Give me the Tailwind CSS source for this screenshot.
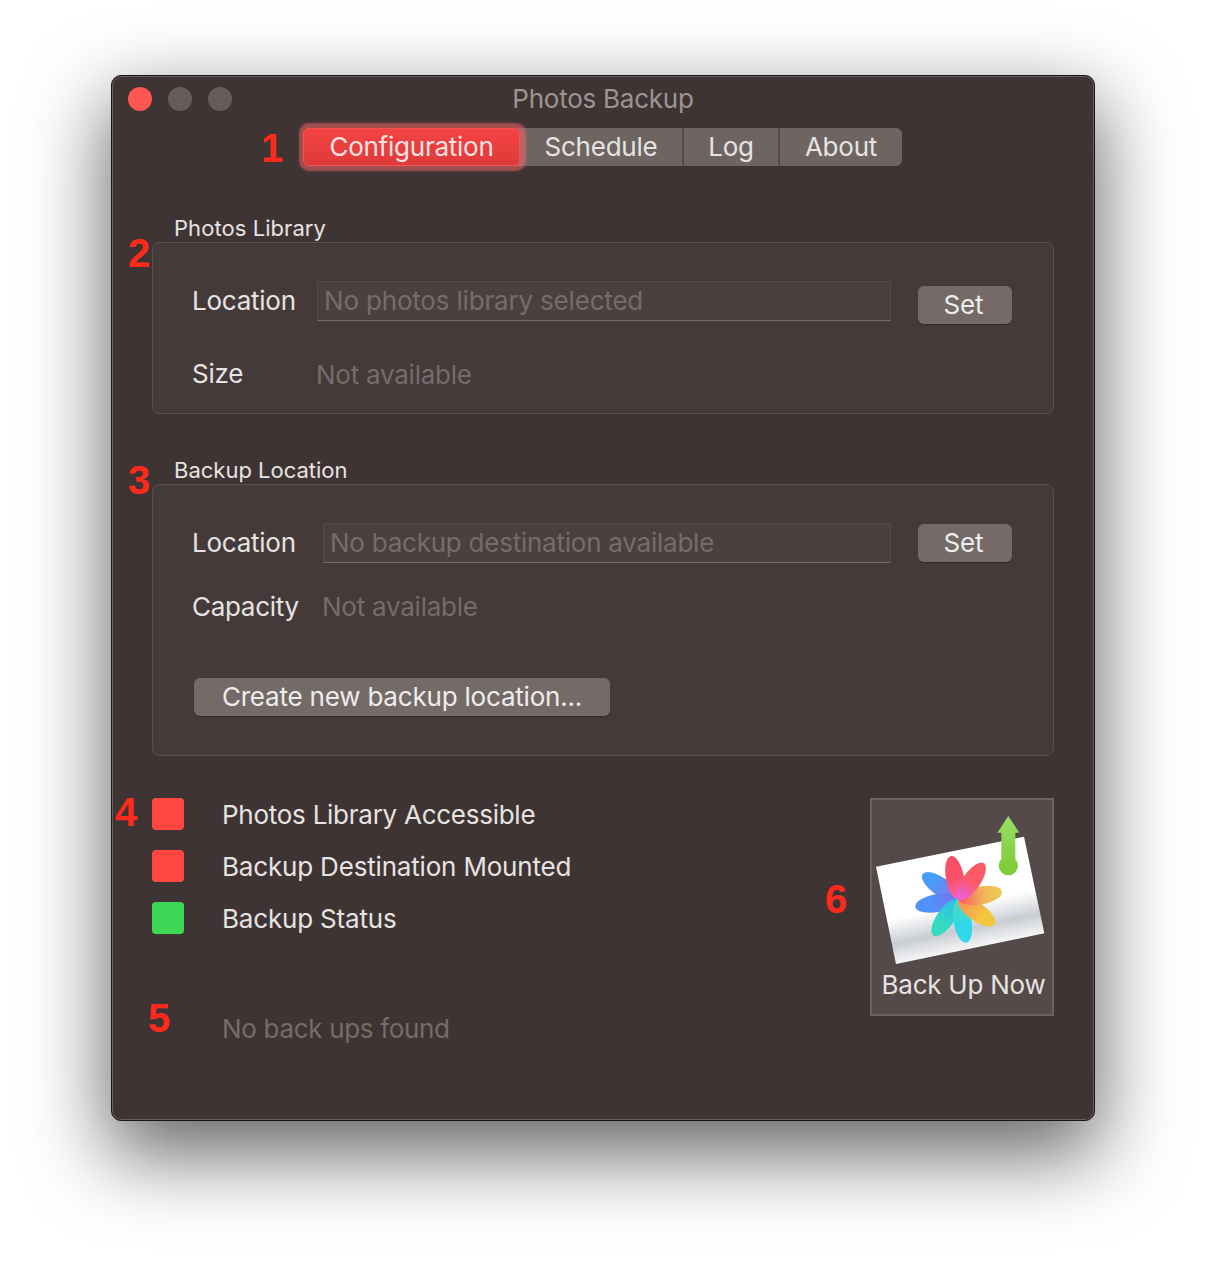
<!DOCTYPE html>
<html lang="en">

<head>
    <meta charset="UTF-8">
    <title>Photos Backup</title>
    <script src="https://cdn.jsdelivr.net/npm/@tailwindcss/browser@4"></script>
</head>

<body class="bg-white font-['Inter',sans-serif] text-[#e6e3e3]">
    <div class="relative w-[1206px] h-[1268px] pt-[75px] overflow-hidden">

        <!-- Window -->
        <div class="ml-[111px] w-[984px] h-[1046px] rounded-[10px] border border-[#1a1515] bg-[#3f3434] shadow-[0_30px_80px_4px_rgba(0,0,0,0.6),inset_0_0_0_1px_#6a615f]">
            <!-- Title bar -->
            <div class="grid grid-cols-[1fr_auto_1fr] items-center h-[46px]">
                <div class="flex gap-4 pl-4">
                    <div class="w-6 h-6 rounded-full bg-[#fc5753]"></div>
                    <div class="w-6 h-6 rounded-full bg-[#655d5b]"></div>
                    <div class="w-6 h-6 rounded-full bg-[#655d5b]"></div>
                </div>
                <div class="text-[26px] leading-[32px] text-[#9b9594] tracking-[-0.24px]">Photos Backup</div>
                <div></div>
            </div>

            <!-- Tabs -->
            <div class="flex mt-[6px] ml-[191px] w-[599px] h-[38px] text-[26px] tracking-[-0.24px] rounded-[6px] bg-[#6e6563]">
                <div class="relative z-10 w-[217px] pb-[2px] flex items-center justify-center rounded-[5px] text-[#fbe3e3] border border-[#f65252] bg-gradient-to-b from-[#f54343] to-[#dd3a3a] shadow-[1px_0_2px_5px_rgba(244,100,104,0.56)]">Configuration</div>
                <div class="w-[164px] pb-[2px] flex items-center justify-center border-r-2 border-[#564c4b]">Schedule</div>
                <div class="w-[96px] pb-[2px] flex items-center justify-center border-r-2 border-[#564c4b]">Log</div>
                <div class="w-[122px] pb-[2px] flex items-center justify-center">About</div>
            </div>

            <div class="ml-[40px] w-[902px]">
                <!-- Photos Library -->
                <div class="mt-[48px] h-[28px] pl-[22px] text-[22px] leading-[28px] tracking-[0.06px]">Photos Library</div>
                <div class="h-[172px] rounded-[8px] border border-[#5b5150] bg-[#453a3a] pl-[39px] pt-[38px]">
                    <div class="flex items-start">
                        <div class="w-[125px] h-[40px] text-[26px] leading-[40px] tracking-[-0.24px]">Location</div>
                        <div class="w-[574px] h-[40px] px-[6px] text-[26px] leading-[38px] tracking-[-0.18px] text-[#756c6b] bg-[#4a4040] border border-[#544a49] border-b-[#756c6b]">No photos library selected</div>
                        <div class="ml-[27px] mt-[5px] w-[94px] h-[38px] pr-[3px] rounded-[6px] bg-[#746b69] text-[26px] leading-[38px] text-center tracking-[-0.18px] text-[#eeecec] shadow-[0_1px_1px_rgba(0,0,0,0.3)]">Set</div>
                    </div>
                    <div class="flex items-start mt-[36px]">
                        <div class="w-[125px] h-[28px] text-[26px] leading-[28px] tracking-[-0.24px]">Size</div>
                        <div class="mt-[1px] -ml-px h-[28px] text-[26px] leading-[28px] tracking-[-0.24px] text-[#756c6b]">Not available</div>
                    </div>
                </div>

                <!-- Backup Location -->
                <div class="mt-[42px] h-[28px] pl-[22px] text-[22px] leading-[28px] tracking-[0px]">Backup Location</div>
                <div class="h-[272px] rounded-[8px] border border-[#5b5150] bg-[#453a3a] pl-[39px] pt-[38px]">
                    <div class="flex items-start">
                        <div class="w-[131px] h-[40px] text-[26px] leading-[40px] tracking-[-0.24px]">Location</div>
                        <div class="w-[568px] h-[40px] px-[6px] text-[26px] leading-[38px] tracking-[-0.24px] text-[#756c6b] bg-[#4a4040] border border-[#544a49] border-b-[#756c6b]">No backup destination available</div>
                        <div class="ml-[27px] mt-[1px] w-[94px] h-[38px] pr-[3px] rounded-[6px] bg-[#746b69] text-[26px] leading-[38px] text-center tracking-[-0.18px] text-[#eeecec] shadow-[0_1px_1px_rgba(0,0,0,0.3)]">Set</div>
                    </div>
                    <div class="flex items-start mt-[30px]">
                        <div class="w-[131px] h-[28px] text-[26px] leading-[28px] tracking-[-0.3px]">Capacity</div>
                        <div class="-ml-px h-[28px] text-[26px] leading-[28px] tracking-[-0.24px] text-[#756c6b]">Not available</div>
                    </div>
                    <div class="ml-[2px] mt-[57px] w-[416px] h-[38px] rounded-[6px] bg-[#746b69] text-[26px] leading-[38px] text-center tracking-[-0.2px] text-[#eeecec] shadow-[0_1px_1px_rgba(0,0,0,0.3)]">Create new backup location...</div>
                </div>

                <!-- Status + Back Up Now -->
                <div class="flex justify-between mt-[42px]">
                    <div>
                        <div class="flex flex-col gap-5">
                            <div class="flex items-center h-8">
                                <div class="w-8 h-8 rounded-[4px] bg-[#ff4640]"></div>
                                <div class="ml-[38px] pt-[2px] text-[26px] leading-[32px] tracking-[-0.26px]">Photos Library Accessible</div>
                            </div>
                            <div class="flex items-center h-8">
                                <div class="w-8 h-8 rounded-[4px] bg-[#ff4640]"></div>
                                <div class="ml-[38px] pt-[2px] text-[26px] leading-[32px] tracking-[-0.18px]">Backup Destination Mounted</div>
                            </div>
                            <div class="flex items-center h-8">
                                <div class="w-8 h-8 rounded-[4px] bg-[#3dd754]"></div>
                                <div class="ml-[38px] pt-[2px] text-[26px] leading-[32px] tracking-[-0.18px]">Backup Status</div>
                            </div>
                        </div>
                        <div class="mt-[81px] ml-[70px] text-[26px] leading-[28px] tracking-[-0.32px] text-[#756c6b]">No back ups found</div>
                    </div>

                    <div class="w-[184px] h-[218px] border-2 border-[#6c6361] bg-[#544a4a] flex flex-col items-center">
                        <svg class="w-[180px] h-[166px] shrink-0" viewBox="36 30 540 498">
                            <defs>
                                <linearGradient id="card" gradientUnits="userSpaceOnUse" x1="270" y1="185" x2="330" y2="476">
                                    <stop offset="0" stop-color="#ffffff"/>
                                    <stop offset="0.55" stop-color="#ffffff"/>
                                    <stop offset="0.8" stop-color="#c9cdd3"/>
                                    <stop offset="1" stop-color="#f6f6f7"/>
                                </linearGradient>
                                <linearGradient id="arrow" x1="0" y1="0" x2="0" y2="1">
                                    <stop offset="0" stop-color="#9ade68"/>
                                    <stop offset="1" stop-color="#7bcb33"/>
                                </linearGradient>
                                <linearGradient id="p1"><stop offset="0" stop-color="#f566a8"/><stop offset="0.5" stop-color="#f9506a"/></linearGradient>
                                <linearGradient id="p2"><stop offset="0" stop-color="#e85fe6"/><stop offset="0.5" stop-color="#fd5a68"/></linearGradient>
                                <linearGradient id="p3"><stop offset="0" stop-color="#fb5a60"/><stop offset="0.6" stop-color="#f0b85a"/><stop offset="1" stop-color="#e8cb52"/></linearGradient>
                                <linearGradient id="p4"><stop offset="0" stop-color="#f98a5c"/><stop offset="0.65" stop-color="#f5c53e"/></linearGradient>
                                <linearGradient id="p5"><stop offset="0" stop-color="#4fdfb4"/><stop offset="0.6" stop-color="#2fd8ea"/></linearGradient>
                                <linearGradient id="p6"><stop offset="0" stop-color="#2fb6f2"/><stop offset="0.7" stop-color="#33dcc0"/></linearGradient>
                                <linearGradient id="p7"><stop offset="0" stop-color="#7570f2"/><stop offset="0.7" stop-color="#4f93f8"/></linearGradient>
                                <linearGradient id="p8"><stop offset="0" stop-color="#9a6cee"/><stop offset="0.7" stop-color="#469ef8"/></linearGradient>
                            </defs>
                            <polygon points="48,230 492,140 553,430 108,522" fill="url(#card)"/>
                            <path d="M445 78 L478 128 L466 128 L466 207 A29 29 0 1 1 424 207 L424 128 L412 128 Z" fill="url(#arrow)"/>
                            <ellipse cx="362" cy="328" rx="66" ry="27" fill="url(#p8)" transform="rotate(215 296 328)"/>
                            <ellipse cx="362" cy="328" rx="66" ry="27" fill="url(#p7)" transform="rotate(170 296 328)"/>
                            <ellipse cx="362" cy="328" rx="66" ry="27" fill="url(#p1)" transform="rotate(-100 296 328)"/>
                            <ellipse cx="362" cy="328" rx="66" ry="27" fill="url(#p6)" transform="rotate(125 296 328)"/>
                            <ellipse cx="362" cy="328" rx="66" ry="27" fill="url(#p5)" transform="rotate(80 296 328)"/>
                            <ellipse cx="362" cy="328" rx="66" ry="27" fill="url(#p4)" transform="rotate(35 296 328)"/>
                            <ellipse cx="362" cy="328" rx="66" ry="27" fill="url(#p3)" transform="rotate(-10 296 328)"/>
                            <ellipse cx="362" cy="328" rx="66" ry="27" fill="url(#p2)" transform="rotate(-55 296 328)"/>
                        </svg>
                        <div class="mt-[3px] pl-[3px] text-[26px] leading-[32px] tracking-[-0.24px] whitespace-nowrap">Back Up Now</div>
                    </div>
                </div>
            </div>
        </div>

        <!-- Red callout numbers -->
        <div class="absolute left-[261px] top-[125px] text-[40px] leading-[46px] font-bold font-['Liberation_Sans',sans-serif] text-[#ff2a1c]">1</div>
        <div class="absolute left-[128px] top-[230px] text-[40px] leading-[46px] font-bold font-['Liberation_Sans',sans-serif] text-[#ff2a1c]">2</div>
        <div class="absolute left-[128px] top-[457px] text-[40px] leading-[46px] font-bold font-['Liberation_Sans',sans-serif] text-[#ff2a1c]">3</div>
        <div class="absolute left-[115px] top-[789px] text-[40px] leading-[46px] font-bold font-['Liberation_Sans',sans-serif] text-[#ff2a1c]">4</div>
        <div class="absolute left-[148px] top-[995px] text-[40px] leading-[46px] font-bold font-['Liberation_Sans',sans-serif] text-[#ff2a1c]">5</div>
        <div class="absolute left-[825px] top-[876px] text-[40px] leading-[46px] font-bold font-['Liberation_Sans',sans-serif] text-[#ff2a1c]">6</div>
    </div>
</body>
</html>
